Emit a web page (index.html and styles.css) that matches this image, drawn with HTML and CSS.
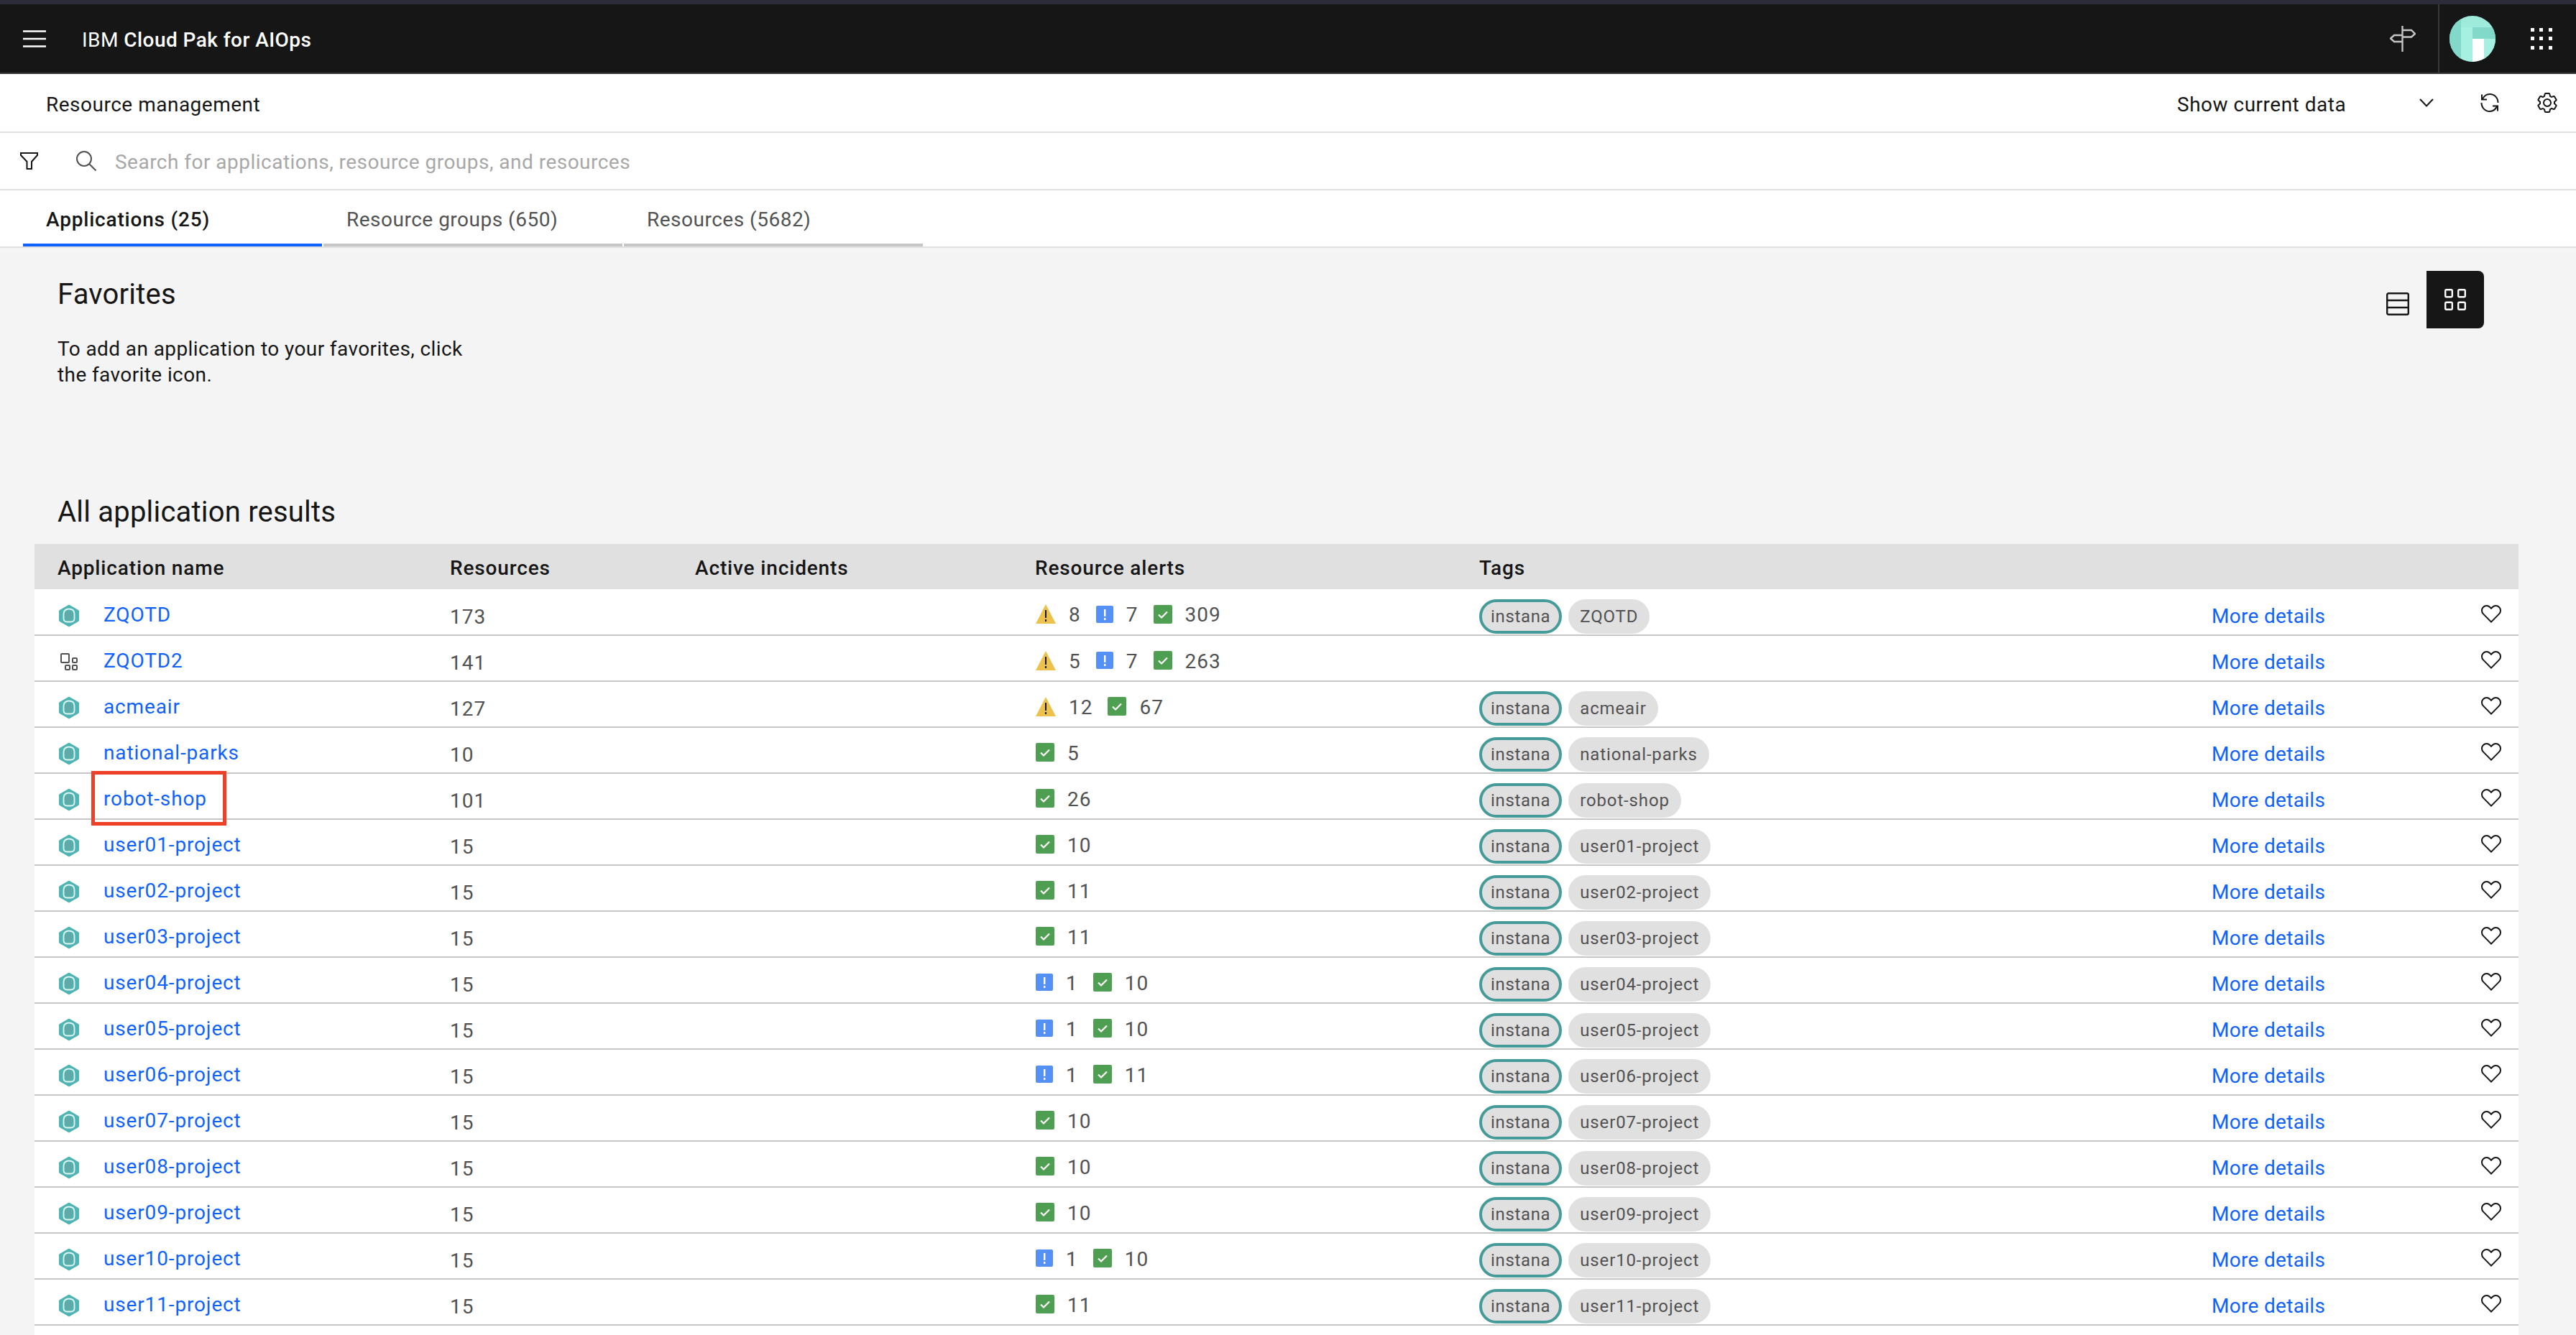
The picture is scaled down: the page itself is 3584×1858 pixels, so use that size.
FILE: index.html
```html
<!DOCTYPE html>
<html>
<head>
  <meta charset="UTF-8">
  <title>Resource management</title>
  <link rel="stylesheet" href="styles.css">
</head>

<body>
  <svg class="sprites" width="0" height="0">
    <symbol id="hex" viewBox="0 0 28 32">
      <path d="M14 0.5 L27 8 Q28 8.6 28 10 V22 Q28 23.4 27 24 L14 31.5 L1 24 Q0 23.4 0 22 V10 Q0 8.6 1 8 Z" fill="#4fb4b2"/>
      <path d="M14 6.5 C19 6.5 21.5 9.5 21.5 13.5 V20 Q21.5 24 17 24.5 H11 Q6.5 24 6.5 20 V13.5 C6.5 9.5 9 6.5 14 6.5 Z" fill="none" stroke="#e4f5f4" stroke-width="1.8"/>
      <circle cx="14" cy="15" r="5.5" fill="#5fa9a8"/>
      <rect x="10" y="19" width="8" height="3" fill="#5fa9a8"/>
    </symbol>
    <symbol id="group" viewBox="0 0 24 24">
      <g fill="none" stroke="#525252" stroke-width="2">
        <rect x="1" y="1" width="11" height="12" rx="1"/>
        <rect x="17" y="7" width="6" height="6" rx="1"/>
        <rect x="7" y="17" width="6" height="6" rx="1"/>
        <rect x="17" y="17" width="6" height="6" rx="1"/>
      </g>
    </symbol>
    <symbol id="warn" viewBox="0 0 28 27">
      <path d="M14 0 L28 27 H0 Z" fill="#ecc24c"/>
      <rect x="13" y="8" width="2" height="11" fill="#161616"/>
      <rect x="13" y="21" width="2" height="3" fill="#161616"/>
    </symbol>
    <symbol id="info" viewBox="0 0 24 24">
      <rect width="24" height="24" rx="2" fill="#5590f6"/>
      <rect x="11" y="5" width="2.4" height="10" fill="#fff"/>
      <rect x="11" y="17" width="2.4" height="3" fill="#fff"/>
    </symbol>
    <symbol id="ok" viewBox="0 0 26 26">
      <rect width="26" height="26" rx="2" fill="#4e9f52"/>
      <path d="M7 13.5 L11 17.5 L19 9.5" fill="none" stroke="#fff" stroke-width="2.2"/>
    </symbol>
    <symbol id="heart" viewBox="0 0 32 32">
      <path fill="#161616" d="M22.45,6a5.47,5.47,0,0,1,3.91,1.64,5.7,5.7,0,0,1,0,8L16,26.13,5.64,15.64a5.7,5.7,0,0,1,0-8,5.48,5.48,0,0,1,7.82,0L16,10.24l2.53-2.58A5.44,5.44,0,0,1,22.45,6m0-2a7.47,7.47,0,0,0-5.34,2.24L16,7.36,14.89,6.24a7.49,7.49,0,0,0-10.68,0,7.72,7.72,0,0,0,0,10.82L16,29,27.79,17.06a7.72,7.72,0,0,0,0-10.82A7.49,7.49,0,0,0,22.45,4Z"/>
    </symbol>
  </svg>

  <header class="topbar">
    <svg class="hamburger" width="32" height="24" viewBox="0 0 32 24"><path d="M0 1.5H32M0 12H32M0 22.5H32" stroke="#fff" stroke-width="2.4"/></svg>
    <div class="brand">IBM <b>Cloud Pak for AIOps</b></div>
    <svg class="signpost" width="36" height="38" viewBox="0 0 36 38" fill="none" stroke="#c6c6c6" stroke-width="2.4">
      <path d="M17.5 1V37"/>
      <path d="M17.5 7H30L35 12L30 16.5H17.5"/>
      <path d="M17.5 14H6L1 18.5L6 23H17.5"/>
    </svg>
    <div class="topbar-right">
      <svg class="avatar" width="64" height="64" viewBox="0 0 64 64">
        <clipPath id="round"><circle cx="32" cy="32" r="32"/></clipPath>
        <g clip-path="url(#round)">
          <rect width="64" height="64" fill="#9febdb"/>
          <rect width="16" height="64" fill="#82d8c9"/>
          <rect x="16" y="16" width="16" height="48" fill="#a6f0e1"/>
          <rect x="32" y="16" width="32" height="16" fill="#82d8c9"/>
          <rect x="32" y="32" width="16" height="32" fill="#fff"/>
          <rect x="48" y="32" width="16" height="32" fill="#a6f0e1"/>
        </g>
      </svg>
      <svg class="switcher" width="30" height="30" viewBox="0 0 30 30" fill="#fff">
        <rect width="5" height="5"/><rect x="12" width="5" height="5"/><rect x="25" width="5" height="5"/>
        <rect y="12" width="5" height="5"/><rect x="12" y="12" width="5" height="5"/><rect x="25" y="12" width="5" height="5"/>
        <rect y="25" width="5" height="5"/><rect x="12" y="25" width="5" height="5"/><rect x="25" y="25" width="5" height="5"/>
      </svg>
    </div>
  </header>

  <div class="titlebar">
    <div class="page-title">Resource management</div>
    <div class="data-select">Show current data</div>
    <svg class="chevron" width="20" height="12" viewBox="0 0 20 12"><path d="M1 1L10 10.5L19 1" fill="none" stroke="#161616" stroke-width="2"/></svg>
    <svg class="refresh" width="28" height="28" viewBox="0 0 28 28" fill="none" stroke="#161616" stroke-width="2">
      <path d="M4 9C6 4.500 10 2 14 2C20.500 2 25.500 7 25.500 14"/>
      <path d="M3 2.500V9.500H10"/>
      <path d="M24 19C22 23.500 18 26 14 26C7.500 26 2.500 21 2.500 14"/>
      <path d="M25 25.500V18.500H18"/>
    </svg>
    <svg class="gear" width="32" height="32" viewBox="0 0 32 32" fill="#161616">
      <path d="M27,16.76c0-.25,0-.5,0-.76s0-.51,0-.77l1.92-1.68A2,2,0,0,0,29.3,11L26.94,7a2,2,0,0,0-1.73-1,2,2,0,0,0-.64.1l-2.43.82a11.35,11.35,0,0,0-1.31-.75l-.51-2.52a2,2,0,0,0-2-1.61H13.64a2,2,0,0,0-2,1.61l-.51,2.52a11.48,11.48,0,0,0-1.32.75L7.43,6.06A2,2,0,0,0,6.79,6,2,2,0,0,0,5.06,7L2.7,11a2,2,0,0,0,.41,2.51L5,15.24c0,.25,0,.5,0,.76s0,.51,0,.77L3.11,18.45A2,2,0,0,0,2.7,21L5.06,25a2,2,0,0,0,1.73,1,2,2,0,0,0,.64-.1l2.43-.82a11.35,11.35,0,0,0,1.31.75l.51,2.52a2,2,0,0,0,2,1.61h4.72a2,2,0,0,0,2-1.61l.51-2.52a11.48,11.48,0,0,0,1.32-.75l2.42.82a2,2,0,0,0,.64.1,2,2,0,0,0,1.73-1L29.3,21a2,2,0,0,0-.41-2.51ZM25.21,24l-3.43-1.16a8.86,8.86,0,0,1-2.71,1.57L18.36,28H13.64l-.71-3.55a9.36,9.36,0,0,1-2.7-1.57L6.79,24,4.43,20l2.72-2.4a8.9,8.9,0,0,1,0-3.13L4.43,12,6.79,8l3.43,1.16a8.86,8.86,0,0,1,2.71-1.57L13.64,4h4.72l.71,3.55a9.36,9.36,0,0,1,2.7,1.57L25.21,8,27.57,12l-2.72,2.4a8.9,8.9,0,0,1,0,3.13L27.57,20Z"/>
      <path d="M16,22a6,6,0,1,1,6-6A5.94,5.94,0,0,1,16,22Zm0-10a3.91,3.91,0,0,0-4,4,3.91,3.91,0,0,0,4,4,3.91,3.91,0,0,0,4-4A3.91,3.91,0,0,0,16,12Z"/>
    </svg>
  </div>

  <div class="searchbar">
    <svg class="filter" width="25" height="24" viewBox="0 0 25 24" fill="none" stroke="#161616" stroke-width="2"><path d="M1 1H24V4L16 13V23H9.500V13L1 4Z"/></svg>
    <svg class="search" width="28" height="28" viewBox="0 0 28 28" fill="none" stroke="#525252" stroke-width="2"><circle cx="11" cy="11" r="10"/><path d="M18 18L27.500 27.500"/></svg>
    <div class="placeholder">Search for applications, resource groups, and resources</div>
  </div>

  <nav class="tabs">
    <div class="tab active">Applications (25)</div>
    <div class="tab">Resource groups (650)</div>
    <div class="tab">Resources (5682)</div>
  </nav>

  <main class="content">
    <section class="favorites">
      <div class="fav-head">
        <h2 class="heading">Favorites</h2>
        <p class="fav-text">To add an application to your favorites, click<br>the favorite icon.</p>
      </div>
      <div class="view-switch">
        <svg width="32" height="32" viewBox="0 0 32 32" fill="none" stroke="#161616" stroke-width="2.400"><rect x="1.200" y="1.200" width="29.600" height="29.600" rx="2"/><path d="M1 11H31M1 21H31"/></svg>
        <div class="view-on">
          <svg width="30" height="30" viewBox="0 0 30 30" fill="none" stroke="#fff" stroke-width="2.400"><rect x="1.200" y="1.200" width="9.600" height="10" rx="1.500"/><rect x="19.200" y="1.200" width="9.600" height="10" rx="1.500"/><rect x="1.200" y="18.800" width="9.600" height="10" rx="1.500"/><rect x="19.200" y="18.800" width="9.600" height="10" rx="1.500"/></svg>
        </div>
      </div>
    </section>

    <h2 class="heading results">All application results</h2>

    <table class="apps">
      <colgroup>
        <col class="c-name"><col class="c-res"><col class="c-inc"><col class="c-alert"><col class="c-tags"><col class="c-more"><col class="c-fav">
      </colgroup>
      <thead>
        <tr><th>Application name</th><th>Resources</th><th>Active incidents</th><th>Resource alerts</th><th>Tags</th><th></th><th></th></tr>
      </thead>
      <tbody>
        <tr>
          <td><div class="app"><svg class="ico"><use href="#hex"/></svg><a>ZQOTD</a></div></td><td class="num">173</td><td></td>
          <td class="al"><div class="alerts"><svg class="w"><use href="#warn"/></svg><span>8</span><svg class="i"><use href="#info"/></svg><span>7</span><svg class="o"><use href="#ok"/></svg><span>309</span></div></td>
          <td class="tg"><div class="tags"><span class="tag inst">instana</span><span class="tag">ZQOTD</span></div></td>
          <td class="lnk"><a class="more">More details</a></td><td class="ht"><svg class="fav"><use href="#heart"/></svg></td>
        </tr>
        <tr>
          <td><div class="app"><svg class="ico grp"><use href="#group"/></svg><a>ZQOTD2</a></div></td><td class="num">141</td><td></td>
          <td class="al"><div class="alerts"><svg class="w"><use href="#warn"/></svg><span>5</span><svg class="i"><use href="#info"/></svg><span>7</span><svg class="o"><use href="#ok"/></svg><span>263</span></div></td>
          <td class="tg"></td>
          <td class="lnk"><a class="more">More details</a></td><td class="ht"><svg class="fav"><use href="#heart"/></svg></td>
        </tr>
        <tr>
          <td><div class="app"><svg class="ico"><use href="#hex"/></svg><a>acmeair</a></div></td><td class="num">127</td><td></td>
          <td class="al"><div class="alerts"><svg class="w"><use href="#warn"/></svg><span>12</span><svg class="o"><use href="#ok"/></svg><span>67</span></div></td>
          <td class="tg"><div class="tags"><span class="tag inst">instana</span><span class="tag">acmeair</span></div></td>
          <td class="lnk"><a class="more">More details</a></td><td class="ht"><svg class="fav"><use href="#heart"/></svg></td>
        </tr>
        <tr>
          <td><div class="app"><svg class="ico"><use href="#hex"/></svg><a>national-parks</a></div></td><td class="num">10</td><td></td>
          <td class="al"><div class="alerts"><svg class="o"><use href="#ok"/></svg><span>5</span></div></td>
          <td class="tg"><div class="tags"><span class="tag inst">instana</span><span class="tag">national-parks</span></div></td>
          <td class="lnk"><a class="more">More details</a></td><td class="ht"><svg class="fav"><use href="#heart"/></svg></td>
        </tr>
        <tr>
          <td><div class="app"><svg class="ico"><use href="#hex"/></svg><a>robot-shop</a></div></td><td class="num">101</td><td></td>
          <td class="al"><div class="alerts"><svg class="o"><use href="#ok"/></svg><span>26</span></div></td>
          <td class="tg"><div class="tags"><span class="tag inst">instana</span><span class="tag">robot-shop</span></div></td>
          <td class="lnk"><a class="more">More details</a></td><td class="ht"><svg class="fav"><use href="#heart"/></svg></td>
        </tr>
        <tr>
          <td><div class="app"><svg class="ico"><use href="#hex"/></svg><a>user01-project</a></div></td><td class="num">15</td><td></td>
          <td class="al"><div class="alerts"><svg class="o"><use href="#ok"/></svg><span>10</span></div></td>
          <td class="tg"><div class="tags"><span class="tag inst">instana</span><span class="tag">user01-project</span></div></td>
          <td class="lnk"><a class="more">More details</a></td><td class="ht"><svg class="fav"><use href="#heart"/></svg></td>
        </tr>
        <tr>
          <td><div class="app"><svg class="ico"><use href="#hex"/></svg><a>user02-project</a></div></td><td class="num">15</td><td></td>
          <td class="al"><div class="alerts"><svg class="o"><use href="#ok"/></svg><span>11</span></div></td>
          <td class="tg"><div class="tags"><span class="tag inst">instana</span><span class="tag">user02-project</span></div></td>
          <td class="lnk"><a class="more">More details</a></td><td class="ht"><svg class="fav"><use href="#heart"/></svg></td>
        </tr>
        <tr>
          <td><div class="app"><svg class="ico"><use href="#hex"/></svg><a>user03-project</a></div></td><td class="num">15</td><td></td>
          <td class="al"><div class="alerts"><svg class="o"><use href="#ok"/></svg><span>11</span></div></td>
          <td class="tg"><div class="tags"><span class="tag inst">instana</span><span class="tag">user03-project</span></div></td>
          <td class="lnk"><a class="more">More details</a></td><td class="ht"><svg class="fav"><use href="#heart"/></svg></td>
        </tr>
        <tr>
          <td><div class="app"><svg class="ico"><use href="#hex"/></svg><a>user04-project</a></div></td><td class="num">15</td><td></td>
          <td class="al"><div class="alerts"><svg class="i"><use href="#info"/></svg><span>1</span><svg class="o"><use href="#ok"/></svg><span>10</span></div></td>
          <td class="tg"><div class="tags"><span class="tag inst">instana</span><span class="tag">user04-project</span></div></td>
          <td class="lnk"><a class="more">More details</a></td><td class="ht"><svg class="fav"><use href="#heart"/></svg></td>
        </tr>
        <tr>
          <td><div class="app"><svg class="ico"><use href="#hex"/></svg><a>user05-project</a></div></td><td class="num">15</td><td></td>
          <td class="al"><div class="alerts"><svg class="i"><use href="#info"/></svg><span>1</span><svg class="o"><use href="#ok"/></svg><span>10</span></div></td>
          <td class="tg"><div class="tags"><span class="tag inst">instana</span><span class="tag">user05-project</span></div></td>
          <td class="lnk"><a class="more">More details</a></td><td class="ht"><svg class="fav"><use href="#heart"/></svg></td>
        </tr>
        <tr>
          <td><div class="app"><svg class="ico"><use href="#hex"/></svg><a>user06-project</a></div></td><td class="num">15</td><td></td>
          <td class="al"><div class="alerts"><svg class="i"><use href="#info"/></svg><span>1</span><svg class="o"><use href="#ok"/></svg><span>11</span></div></td>
          <td class="tg"><div class="tags"><span class="tag inst">instana</span><span class="tag">user06-project</span></div></td>
          <td class="lnk"><a class="more">More details</a></td><td class="ht"><svg class="fav"><use href="#heart"/></svg></td>
        </tr>
        <tr>
          <td><div class="app"><svg class="ico"><use href="#hex"/></svg><a>user07-project</a></div></td><td class="num">15</td><td></td>
          <td class="al"><div class="alerts"><svg class="o"><use href="#ok"/></svg><span>10</span></div></td>
          <td class="tg"><div class="tags"><span class="tag inst">instana</span><span class="tag">user07-project</span></div></td>
          <td class="lnk"><a class="more">More details</a></td><td class="ht"><svg class="fav"><use href="#heart"/></svg></td>
        </tr>
        <tr>
          <td><div class="app"><svg class="ico"><use href="#hex"/></svg><a>user08-project</a></div></td><td class="num">15</td><td></td>
          <td class="al"><div class="alerts"><svg class="o"><use href="#ok"/></svg><span>10</span></div></td>
          <td class="tg"><div class="tags"><span class="tag inst">instana</span><span class="tag">user08-project</span></div></td>
          <td class="lnk"><a class="more">More details</a></td><td class="ht"><svg class="fav"><use href="#heart"/></svg></td>
        </tr>
        <tr>
          <td><div class="app"><svg class="ico"><use href="#hex"/></svg><a>user09-project</a></div></td><td class="num">15</td><td></td>
          <td class="al"><div class="alerts"><svg class="o"><use href="#ok"/></svg><span>10</span></div></td>
          <td class="tg"><div class="tags"><span class="tag inst">instana</span><span class="tag">user09-project</span></div></td>
          <td class="lnk"><a class="more">More details</a></td><td class="ht"><svg class="fav"><use href="#heart"/></svg></td>
        </tr>
        <tr>
          <td><div class="app"><svg class="ico"><use href="#hex"/></svg><a>user10-project</a></div></td><td class="num">15</td><td></td>
          <td class="al"><div class="alerts"><svg class="i"><use href="#info"/></svg><span>1</span><svg class="o"><use href="#ok"/></svg><span>10</span></div></td>
          <td class="tg"><div class="tags"><span class="tag inst">instana</span><span class="tag">user10-project</span></div></td>
          <td class="lnk"><a class="more">More details</a></td><td class="ht"><svg class="fav"><use href="#heart"/></svg></td>
        </tr>
        <tr>
          <td><div class="app"><svg class="ico"><use href="#hex"/></svg><a>user11-project</a></div></td><td class="num">15</td><td></td>
          <td class="al"><div class="alerts"><svg class="o"><use href="#ok"/></svg><span>11</span></div></td>
          <td class="tg"><div class="tags"><span class="tag inst">instana</span><span class="tag">user11-project</span></div></td>
          <td class="lnk"><a class="more">More details</a></td><td class="ht"><svg class="fav"><use href="#heart"/></svg></td>
        </tr>
        <!-- next row is cut by the window, only the top of its tags shows -->
        <tr>
          <td></td><td></td><td></td><td></td>
          <td class="tg"><div class="tags"><span class="tag inst stub-a"></span><span class="tag stub-b"></span></div></td>
          <td></td><td></td>
        </tr>
      </tbody>
    </table>
  </main>

  <!-- red annotation drawn on top of the screenshot -->
  <div class="callout"></div>
</body>
</html>
```

FILE: styles.css
```css
* { box-sizing: border-box; }

body {
  position: relative;
  margin: 0;
  height: 1858px;
  overflow: hidden;
  background: #f4f4f4;
  color: #161616;
  font-family: Roboto, "Liberation Sans", sans-serif;
  font-size: 28px;
  letter-spacing: 0.5px;
}

.sprites { position: absolute; }

/* top bar */
.topbar {
  display: flex;
  align-items: center;
  height: 103px;
  padding-left: 32px;
  background: #161616;
  border-top: 6px solid #2c2c3a;
  border-bottom: 2px solid #393939;
  color: #fff;
}
.hamburger { margin-right: 50px; }
.brand { padding-top: 4px; letter-spacing: 0.45px; }
.brand b { font-weight: 500; }
.signpost { margin-left: auto; margin-right: 31px; }
.topbar-right {
  display: flex;
  align-items: center;
  height: 100%;
  padding: 0 33px 0 14px;
  border-left: 2px solid #393939;
}
.avatar { margin-right: 49px; }

/* title + search rows */
.titlebar {
  display: flex;
  align-items: center;
  height: 82px;
  padding: 0 24px 0 64px;
  background: #fff;
  border-bottom: 2px solid #e0e0e0;
}
.page-title { margin-right: auto; padding-top: 4px; }
.data-select { width: 337px; padding-top: 4px; }
.chevron { margin-right: 64px; }
.refresh { margin-right: 50px; }

.searchbar {
  display: flex;
  align-items: center;
  height: 80px;
  padding-left: 28px;
  background: #fff;
  border-bottom: 2px solid #e0e0e0;
}
.filter { margin-right: 53px; }
.search { margin-right: 26px; }
.placeholder { padding-top: 2px; color: #a8a8a8; letter-spacing: 0.48px; }

/* tabs */
.tabs {
  display: flex;
  gap: 2px;
  height: 80px;
  padding-left: 32px;
  background: #fff;
  border-bottom: 2px solid #e0e0e0;
}
.tab {
  width: 416px;
  padding: 24px 32px 0;
  border-bottom: 4px solid #c6c6c6;
  color: #525252;
}
.tab.active {
  border-bottom-color: #0f62fe;
  color: #161616;
  font-weight: 500;
  letter-spacing: 0.8px;
}

/* favorites */
.content { padding: 0 80px 0 48px; }
.favorites {
  display: flex;
  justify-content: space-between;
  height: 304px;
  padding: 32px 48px 0 32px;
}
.fav-head { padding-top: 7px; }
.heading {
  margin: 0;
  font-size: 40px;
  font-weight: 400;
  line-height: 52px;
  letter-spacing: 0.2px;
}
.fav-text {
  margin: 32px 0 0;
  line-height: 36px;
  letter-spacing: 0.4px;
}
.results {
  height: 108px;
  padding: 38px 0 0 32px;
}
.view-switch {
  display: flex;
  align-items: center;
  gap: 24px;
  height: 80px;
}
.view-switch > svg { margin-top: 12px; }
.view-on {
  display: flex;
  align-items: center;
  justify-content: center;
  width: 80px;
  height: 80px;
  background: #161616;
  border-radius: 0 8px 8px 0;
}

/* table */
.apps {
  width: 3456px;
  table-layout: fixed;
  border-collapse: collapse;
  background: #fff;
}
.c-name { width: 546px; }
.c-res { width: 341px; }
.c-inc { width: 473px; }
.c-alert { width: 618px; }
.c-tags { width: 1019px; }
.c-more { width: 373px; }
.c-fav { width: 86px; }

.apps th {
  height: 63px;
  padding: 3px 0 0 32px;
  background: #e0e0e0;
  font-weight: 500;
  text-align: left;
  letter-spacing: 0.85px;
}
.apps td {
  height: 64px;
  padding: 10px 0 0 32px;
  border-bottom: 2px solid #c6c6c6;
  color: #525252;
}
.apps td.num { padding-top: 13px; letter-spacing: 1px; }
.apps td.al { padding-top: 6px; }
.apps td.tg { padding-top: 12px; }
.apps td.lnk { padding-top: 11px; }
.apps td.ht { padding-top: 4px; }

.app {
  display: flex;
  align-items: center;
  letter-spacing: 0.85px;
}
.app a { margin-bottom: 3px; }
.ico { width: 28px; height: 32px; margin-left: 2px; margin-right: 34px; }
.ico.grp { width: 24px; height: 24px; margin-left: 4px; margin-right: 36px; }
.app a, .more { color: #0f62fe; }
.more { letter-spacing: 0.3px; }

.alerts {
  display: flex;
  align-items: center;
  padding-left: 1px;
  letter-spacing: 1px;
}
.alerts span { margin-right: 21px; margin-left: 18px; padding-top: 2px; }
.w { width: 28px; height: 27px; }
.i { width: 24px; height: 24px; }
.o { width: 26px; height: 26px; }

.tags {
  display: flex;
  gap: 9px;
}
.tag {
  height: 48px;
  padding: 0 16px;
  background: #e0e0e0;
  border-radius: 24px;
  font-size: 24px;
  line-height: 48px;
  letter-spacing: 0.85px;
}
.tag.inst {
  padding: 0 12px;
  border: 4px solid #459b99;
  line-height: 40px;
  letter-spacing: 0.65px;
}
.stub-a { width: 114px; }
.stub-b { width: 188px; }
.fav { display: block; width: 32px; height: 32px; }

.callout {
  position: absolute;
  left: 127px;
  top: 1073px;
  width: 188px;
  height: 76px;
  border: 5px solid #ee4026;
}
```
